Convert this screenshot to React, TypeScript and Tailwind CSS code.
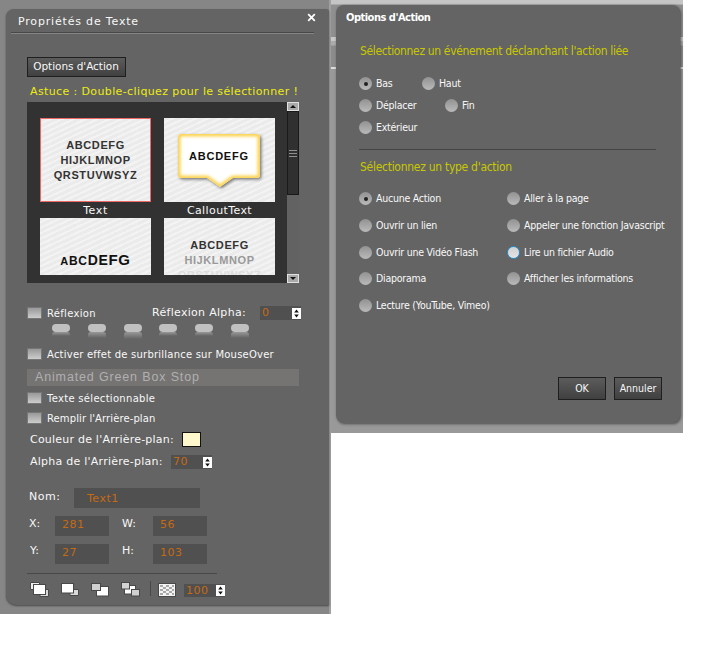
import React from 'react';

const CheckBox: React.FC = () => (
  <span className="h-[12px] w-[15px] shrink-0 border border-[#777] bg-linear-to-b from-[#999] to-[#cdcdcd]" />
);

const Stepper: React.FC<{ value: string; className: string }> = ({ value, className }) => (
  <div className={`flex items-center bg-[#505050] ${className}`}>
    <span className="flex-1 text-[11px] leading-[14px] tracking-[0.5px] text-[#c66a13]">{value}</span>
    <svg className="shrink-0" width="9" height="11" viewBox="0 0 9 11">
      <rect width="9" height="11" fill="#fff" />
      <path d="M2.2 4.6 4.5 1.6 6.8 4.6ZM2.2 6.4 4.5 9.4 6.8 6.4Z" fill="#111" />
    </svg>
  </div>
);

interface RadioProps {
  label: string;
  checked?: boolean;
  focused?: boolean;
  className?: string;
}

const Radio: React.FC<RadioProps> = ({ label, checked, focused, className = '' }) => (
  <div className={`flex h-[13px] items-center gap-[4px] ${className}`}>
    <span
      className={`flex size-[13px] shrink-0 items-center justify-center rounded-full ${
        focused
          ? 'border-[1.5px] border-[#2591d4] bg-linear-to-b from-[#d0d0d0] to-[#e4e4e4]'
          : 'bg-linear-to-b from-[#929292] to-[#bababa]'
      }`}
    >
      {checked && <span className="size-[4px] rounded-full bg-[#222]" />}
    </span>
    <span className="text-[10.5px] leading-[13px] tracking-[-0.24px] whitespace-nowrap text-[#f8f8f8]">{label}</span>
  </div>
);

const Field: React.FC<{ value: string; className: string }> = ({ value, className }) => (
  <div className={`h-[20px] bg-[#505050] text-[11px] tracking-[0.5px] text-[#c66a13] ${className}`}>{value}</div>
);

const STRIPES =
  'bg-[repeating-linear-gradient(155deg,#ebebeb_0px,#ebebeb_3px,#f3f3f3_3px,#f3f3f3_5px)]';

const DARK_BUTTON =
  'flex items-center justify-center border-[1.5px] border-[#1f1f1f] bg-linear-to-b from-[#5c5c5c] to-[#404040] text-[#f8f8f8]';

const BUBBLE = 'M17 16H93Q96 16 96 19V57Q96 60 93 60H69L56 69 43 60H17Q14 60 14 57V19Q14 16 17 16Z';

const PILLS = [4, 6, 7, 4, 4, 6];

const Thumbnails: React.FC = () => (
  <div className="mt-[3px] ml-[21px] flex h-[181px] w-[272px] bg-[#323232]">
    <div className="h-[181px] w-[260px] pt-[16px] pl-[13px]">
      <div className="flex gap-[13px] font-['Liberation_Sans',sans-serif] text-[11px] font-bold text-[#333]">
        <div
          className={`h-[84px] w-[111px] border border-[#ef6868] pt-[19px] text-center leading-[15px] tracking-[0.6px] ${STRIPES}`}
        >
          ABCDEFG
          <br />
          HIJKLMNOP
          <br />
          QRSTUVWSYZ
        </div>
        <div className={`h-[84px] w-[111px] ${STRIPES}`}>
          <svg width="111" height="84" viewBox="0 0 111 84">
            <defs>
              <filter id="glow" x="-20%" y="-20%" width="140%" height="140%">
                <feGaussianBlur stdDeviation="1.6" />
              </filter>
              <clipPath id="bubble">
                <path d={BUBBLE} />
              </clipPath>
            </defs>
            <path d={BUBBLE} transform="translate(1.5 1.5)" fill="#777" filter="url(#glow)" />
            <g clipPath="url(#bubble)">
              <rect width="111" height="84" fill="#fff" />
              <path d={BUBBLE} fill="none" stroke="#fbd350" strokeWidth="5" filter="url(#glow)" />
            </g>
            <text x="54.5" y="42" textAnchor="middle" textLength="59" fontSize="11" fontWeight="bold" fill="#111">
              ABCDEFG
            </text>
          </svg>
        </div>
      </div>
      <div className="flex h-[16px] gap-[13px] text-center text-[11px] leading-[17px] text-[#f8f8f8]">
        <span className="w-[111px] tracking-[0.6px]">Text</span>
        <span className="w-[111px] tracking-[0.4px]">CalloutText</span>
      </div>
      <div className="flex gap-[13px] font-['Liberation_Sans',sans-serif] font-bold">
        <div
          className={`flex h-[57px] w-[111px] items-baseline justify-center pt-[32px] leading-[20px] tracking-[0.7px] text-[#111] ${STRIPES}`}
        >
          <span className="text-[11px]">A</span>
          <span className="text-[12px]">BC</span>
          <span className="text-[14px]">DE</span>
          <span className="text-[15px]">FG</span>
        </div>
        <div
          className={`h-[57px] w-[111px] overflow-hidden pt-[20px] text-center text-[11px] leading-[15px] tracking-[0.6px] ${STRIPES}`}
        >
          <p className="text-[#333]">ABCDEFG</p>
          <p className="text-[#999]">HIJKLMNOP</p>
          <p className="text-[#ddd]">QRSTUVWSYZ</p>
        </div>
      </div>
    </div>
    <div className="flex w-[12px] flex-col bg-[#626262]">
      <svg width="12" height="9" viewBox="0 0 12 9">
        <rect x=".5" y=".5" width="11" height="8" fill="#aaa" stroke="#e0e0e0" />
        <path d="M3 6 6 3 9 6Z" fill="#111" />
      </svg>
      <div className="flex h-[84px] flex-col items-center justify-center gap-[2px] border border-[#191919] bg-[#303030]">
        <span className="h-px w-[8px] bg-[#909090]" />
        <span className="h-px w-[8px] bg-[#909090]" />
        <span className="h-px w-[8px] bg-[#909090]" />
      </div>
      <svg className="mt-auto" width="12" height="9" viewBox="0 0 12 9">
        <rect x=".5" y=".5" width="11" height="8" fill="#aaa" stroke="#e0e0e0" />
        <path d="M3 3 6 6 9 3Z" fill="#111" />
      </svg>
    </div>
  </div>
);

const ArrangeIcons: React.FC = () => (
  <svg className="shrink-0" width="150" height="18" viewBox="0 0 150 18">
    <g stroke="#484848" strokeWidth="1">
      <path d="M.5 2.500H9.500V5H4V9.500H.5Z" fill="#eee" />
      <path d="M15 9.500H18.500V16.500H10V13.500H15Z" fill="#d8d8d8" />
      <rect x="3.500" y="4.500" width="12" height="10" fill="#fff" />
      <path d="M43.500 9.500H48.500V15.500H40V12.500H43.500Z" fill="#d8d8d8" />
      <rect x="31.500" y="3.500" width="12" height="9.500" fill="#fff" />
      <rect x="66.500" y="6.500" width="12" height="9.500" fill="#fff" />
      <rect x="61.500" y="3.500" width="9" height="7" fill="#d0d0d0" />
      <rect x="94.500" y="5.500" width="11" height="8.500" fill="#fff" />
      <rect x="91.500" y="2.500" width="8" height="6.500" fill="#d4d4d4" />
      <rect x="101.500" y="9.500" width="8" height="6.500" fill="#d0d0d0" />
      <path d="M120.500 1V16" />
      <rect x="128.500" y="3.500" width="17" height="13" fill="#f4f4f4" />
    </g>
    <path
      d="M130 5h3v2h-3zM136 5h3v2h-3zM142 5h2v2h-2zM133 7h3v2h-3zM139 7h3v2h-3zM130 9h3v2h-3zM136 9h3v2h-3zM142 9h2v2h-2zM133 11h3v2h-3zM139 11h3v2h-3zM130 13h3v2h-3zM136 13h3v2h-3zM142 13h2v2h-2z"
      fill="#a8a8a8"
    />
  </svg>
);

const TextProperties: React.FC = () => (
  <section className="h-[614px] w-[331px] border-r-2 border-r-[#a0a0a0] bg-[#868686] pt-[9px] pl-[6px]">
    <div className="h-[596px] w-[323px] rounded-tl-[8px] rounded-tr-[3px] rounded-bl-[10px] bg-[#646464] text-[11px] text-[#f8f8f8] shadow-[0_1px_2px_#4a4a4a]">
      <header className="ml-[5px] flex h-[24px] w-[303px] items-center justify-between border-b border-[#484848] pl-[7px] shadow-[0_1px_0_#858585]">
        <h1 className="mt-[3px] text-[11px] tracking-[0.82px]">Propriétés de Texte</h1>
        <svg className="mt-[-7px] mr-[-2px]" width="9" height="9" viewBox="0 0 9 9">
          <path d="M1.200 1.200 7.800 7.800M7.800 1.200 1.200 7.800" stroke="#fff" strokeWidth="1.800" />
        </svg>
      </header>
      <button className={`mt-[24px] ml-[21px] h-[20px] w-[99px] pr-px text-[10.5px] tracking-[-0.05px] ${DARK_BUTTON}`}>
        Options d'Action
      </button>
      <p className="mt-[6px] ml-[24px] h-[16px] leading-[17px] tracking-[0.38px] whitespace-nowrap text-[#ecec10]">
        Astuce : Double-cliquez pour le sélectionner !
      </p>
      <Thumbnails />

      <div className="mt-[22px] ml-[21px] flex h-[16px] items-center">
        <CheckBox />
        <span className="ml-[5px] w-[105px] text-[10px] tracking-[0.3px]">Réflexion</span>
        <span className="w-[108px] tracking-[0.3px]">Réflexion Alpha:</span>
        <Stepper value="0" className="h-[14px] w-[41px] pl-[2px]" />
      </div>
      <div className="mt-[3px] ml-[46px] flex h-[16px] gap-[17.8px]">
        {PILLS.map((depth, i) => (
          <div key={i} className="w-[18px]">
            <div className="h-[8px] rounded-[4px] bg-[#c0c0c0]" />
            <div className="rounded-t-[3px] bg-linear-to-b from-[#999] to-[#646464]" style={{ height: depth }} />
          </div>
        ))}
      </div>
      <div className="mt-[7px] ml-[21px] flex h-[14px] items-center gap-[5px] text-[10px]">
        <CheckBox />
        <span className="tracking-[0.22px] whitespace-nowrap">Activer effet de surbrillance sur MouseOver</span>
      </div>
      <div className="mt-[8px] ml-[21px] h-[17px] w-[272px] bg-[#767373] pl-[8px] font-['Liberation_Sans',sans-serif] text-[12.5px] leading-[17px] tracking-[0.85px] text-[#b0b0b0]">
        Animated Green Box Stop
      </div>
      <div className="mt-[5px] ml-[21px] flex h-[14px] items-center gap-[5px] text-[10px]">
        <CheckBox />
        <span className="tracking-[0.3px]">Texte sélectionnable</span>
      </div>
      <div className="mt-[6px] ml-[21px] flex h-[14px] items-center gap-[5px] text-[10px]">
        <CheckBox />
        <span className="tracking-[0.1px]">Remplir l'Arrière-plan</span>
      </div>
      <div className="mt-[6px] ml-[24px] flex h-[16px] items-center">
        <span className="mt-[3px] w-[152px] tracking-[0.22px] whitespace-nowrap">Couleur de l'Arrière-plan:</span>
        <span className="h-[15px] w-[19px] border-[1.5px] border-[#111] bg-[#fff8cd]" />
      </div>
      <div className="mt-[6px] ml-[24px] flex h-[16px] items-center">
        <span className="mt-[3px] w-[141px] tracking-[0.25px] whitespace-nowrap">Alpha de l'Arrière-plan:</span>
        <Stepper value="70" className="mt-[2px] h-[14px] w-[41px] pl-[2px]" />
      </div>

      <div className="mt-[19px] ml-[23px] flex h-[20px]">
        <span className="w-[45px] leading-[18px] tracking-[0.5px]">Nom:</span>
        <Field value="Text1" className="w-[126px] pl-[13px] leading-[21px]" />
      </div>
      <div className="mt-[8px] ml-[23px] flex h-[20px]">
        <span className="w-[26px] leading-[16px]">X:</span>
        <Field value="281" className="w-[54px] pl-[7px] leading-[17px]" />
        <span className="w-[44px] pl-[13px] leading-[16px]">W:</span>
        <Field value="56" className="w-[54px] pl-[7px] leading-[17px]" />
      </div>
      <div className="mt-[8px] ml-[23px] flex h-[20px]">
        <span className="w-[26px] pl-px leading-[13px]">Y:</span>
        <Field value="27" className="w-[54px] pl-[7px] leading-[18px]" />
        <span className="w-[44px] pl-[13px] leading-[13px]">H:</span>
        <Field value="103" className="w-[54px] pl-[7px] leading-[18px]" />
      </div>
      <hr className="mt-[9px] ml-[21px] w-[190px] border-[#484848]" />
      <div className="mt-[6px] ml-[24px] flex h-[18px] items-center">
        <ArrangeIcons />
        <Stepper value="100" className="mt-[3px] ml-[4px] h-[13px] w-[41px] pl-[2px]" />
      </div>
    </div>
  </section>
);

const ActionOptions: React.FC = () => (
  <section className="h-[433px] w-[352px] bg-[linear-gradient(#c5c5c5_4px,#909090_5px,#909090_37px,#c8c8c8_37px,#c8c8c8_41px,#acacac_41px,#acacac_45px,#8c8c8c_46px,#8c8c8c_67px,#ddd_67px,#ddd_69px,#999_69px)] pt-[5px] pl-[5px] font-['DejaVu_Sans_Condensed','DejaVu_Sans',sans-serif] [font-stretch:condensed]">
    <div className="h-[418px] w-[344px] rounded-[8px] bg-[#646464] shadow-[1px_1px_3px_#4a4a4a]">
      <h2 className="pt-[5px] pl-[10px] text-[11px] leading-[15px] font-bold tracking-[-0.5px] text-white">
        Options d'Action
      </h2>
      <p className="mt-[18px] ml-[24px] h-[16px] text-[12px] leading-[16px] tracking-[-0.35px] whitespace-nowrap text-[#c8c800]">
        Sélectionnez un événement déclanchant l'action liée
      </p>
      <div className="mt-[18px] ml-[23px] flex">
        <Radio label="Bas" checked className="w-[63px]" />
        <Radio label="Haut" />
      </div>
      <div className="mt-[9px] ml-[23px] flex">
        <Radio label="Déplacer" className="w-[86px]" />
        <Radio label="Fin" />
      </div>
      <Radio label="Extérieur" className="mt-[9px] ml-[23px]" />
      <hr className="mt-[15px] ml-[23px] w-[297px] border-[#444]" />
      <p className="mt-[9px] ml-[24px] h-[16px] text-[12px] leading-[16px] tracking-[-0.28px] text-[#c8c800]">
        Sélectionnez un type d'action
      </p>
      <div className="mt-[17px] ml-[23px] grid grid-cols-[148px_auto] gap-y-[13.8px]">
        <Radio label="Aucune Action" checked />
        <Radio label="Aller à la page" />
        <Radio label="Ouvrir un lien" />
        <Radio label="Appeler une fonction Javascript" />
        <Radio label="Ouvrir une Vidéo Flash" />
        <Radio label="Lire un fichier Audio" focused />
        <Radio label="Diaporama" />
        <Radio label="Afficher les informations" />
        <Radio label="Lecture (YouTube, Vimeo)" />
      </div>
      <div className="mt-[65px] ml-[222px] flex gap-[8px] text-[10.5px]">
        <button className={`h-[23px] w-[48px] ${DARK_BUTTON}`}>OK</button>
        <button className={`h-[23px] w-[48px] ${DARK_BUTTON}`}>Annuler</button>
      </div>
    </div>
  </section>
);

const App: React.FC = () => (
  <main className="flex h-[650px] w-[714px] items-start overflow-hidden bg-white font-['DejaVu_Sans',sans-serif]">
    <TextProperties />
    <ActionOptions />
  </main>
);

export default App;
